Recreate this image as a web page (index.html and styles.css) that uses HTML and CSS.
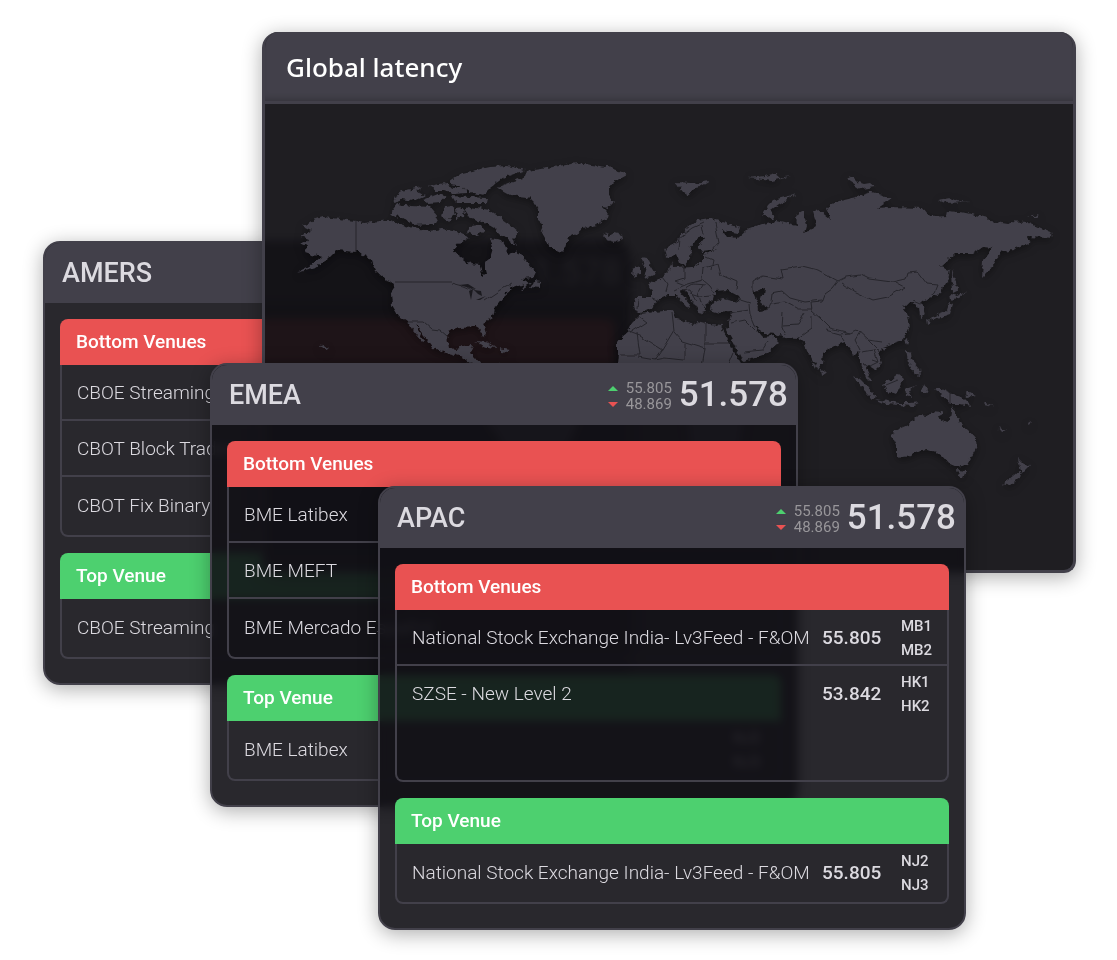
FILE: index.html
```
<!DOCTYPE html>
<html lang="en">
<head>
<meta charset="utf-8">
<meta name="viewport" content="width=device-width, initial-scale=1">
<title>Global latency</title>
<link rel="stylesheet" href="styles.css">
</head>
<body>
<main class="desktop">

<section class="panel amers">
  <header class="panel-head">
    <h2 class="region">AMERS</h2>
    <strong class="score">51.578</strong>
  </header>
  <div class="panel-body">
    <section class="venues">
      <h3 class="band bottom">Bottom Venues</h3>
      <table class="list">
        <tr><td class="name">CBOE Streaming</td></tr>
        <tr><td class="name">CBOT Block Trades</td></tr>
        <tr><td class="name">CBOT Fix Binary</td></tr>
      </table>
    </section>
    <section class="venues">
      <h3 class="band top">Top Venue</h3>
      <table class="list">
        <tr><td class="name">CBOE Streaming</td></tr>
      </table>
    </section>
  </div>
</section>

<section class="map-panel">
  <header class="map-head"><h1 class="map-title">Global latency</h1></header>
  <svg class="map" viewBox="265 104 808 466" role="img" aria-label="World map">
    <defs>
      <filter id="coast" x="-5%" y="-5%" width="110%" height="110%" color-interpolation-filters="sRGB">
        <feTurbulence type="fractalNoise" baseFrequency="0.2" numOctaves="2" seed="4" result="n"/>
        <feDisplacementMap in="SourceGraphic" in2="n" scale="6" xChannelSelector="R" yChannelSelector="G" result="d"/>
        <feDropShadow in="d" dx="0" dy="3" stdDeviation="4" flood-color="#000" flood-opacity=".4"/>
      </filter>
      <filter id="wiggle" x="-5%" y="-5%" width="110%" height="110%" color-interpolation-filters="sRGB">
        <feTurbulence type="fractalNoise" baseFrequency="0.1" numOctaves="1" seed="4" result="n"/>
        <feDisplacementMap in="SourceGraphic" in2="n" scale="5" xChannelSelector="R" yChannelSelector="G"/>
      </filter>
    </defs>
    <g class="land" filter="url(#coast)">
      <!-- North America -->
      <path d="M356 221L340 219 323 217 313 220 303 226 311 230 301 236 309 239 300 243 307 246 304 252 313 255 322 257 312 264 297 272 315 267 327 260 337 250 345 251 356 252 368 257 375 267 385 278 394 284 391 293 392 305 398 315 407 321 413 330 422 341 424 340 415 325 417 326 424 336 433 348 447 353 460 356 470 362 478 372 486 372 476 358 470 352 473 345 462 346 456 350 449 348 447 337 450 330 460 327 477 326 480 330 483 336 486 334 483 323 493 317 495 307 503 297 513 288 524 284 520 290 530 284 522 279 533 278 536 272 525 260 517 250 510 255 502 240 490 238 493 247 490 257 485 265 487 273 482 276 480 265 470 264 457 255 453 250 460 242 470 238 457 232 443 229 427 231 407 226 390 220 363 223Z"/>
      <path d="M534 281L540 282 542 288 530 287ZM393 197L406 190 422 187 416 192 426 195 412 201 402 199 396 203ZM390 213L397 204 412 206 430 207 438 217 434 224 413 225 405 219 392 215ZM423 200L438 194 446 197 440 202 428 203ZM429 186L444 183 454 188 463 186 467 193 453 194 444 191 436 191ZM450 181L462 173 490 167 508 166 525 170 503 178 491 187 483 195 470 192 463 187 452 184ZM452 196L487 198 486 203 456 203ZM444 207L453 206 455 215 448 222 442 217ZM456 208L464 207 463 217 457 219ZM470 207L490 210 502 219 520 232 513 238 516 246 508 240 500 235 494 228 487 224 478 220 468 217 464 211ZM470 226L481 225 485 231 474 236 467 232ZM371 262L377 266 386 276 392 281 386 280 376 271Z"/>
      <!-- Greenland and Iceland -->
      <path d="M498 187L513 181 525 177 527 171 547 168 577 163 607 167 628 174 614 182 609 188 609 196 614 201 608 207 602 206 608 212 607 218 597 225 583 228 576 234 568 238 565 248 561 252 550 247 545 239 541 232 543 224 538 220 538 210 533 202 528 197 510 195 501 190ZM603 235L607 233 609 236 614 233 622 235 623 239 614 242 607 240Z"/>
      <!-- Caribbean and South America -->
      <path d="M474 342L486 343 498 348 487 347ZM500 348L510 350 508 353 500 352ZM486 372L500 364 520 370 545 384 552 396 580 408 577 428 563 452 548 470 530 510 524 540 510 520 506 450 478 408Z"/>
      <!-- Africa -->
      <path d="M641 314L655 312 672 310 675 318 684 321 693 325 698 321 710 324 723 325 722 329 727 338 733 350 742 366 770 372 752 400 742 425 740 455 720 490 704 496 690 450 688 412 676 404 640 404 619 382 617 364 618 353 618 343 622 337 628 332 632 323Z"/>
      <!-- Eurasia -->
      <path fill-rule="evenodd" d="M635 297L634 304 635 310 642 313 652 308 657 300 668 295 676 295 683 303 688 309 690 304 680 292 685 290 693 302 700 314 706 312 703 306 710 302 714 298 716 291 727 290 740 297 738 302 723 299 711 303 710 310 720 313 731 312 729 323 727 331 735 346 743 362 767 353 779 342 773 336 763 337 754 326 764 333 775 334 785 337 797 338 805 344 808 352 817 370 822 363 823 353 837 345 845 342 850 349 854 356 858 352 861 364 868 382 871 379 864 364 870 367 875 370 882 363 878 352 883 347 900 341 907 333 910 326 907 313 902 307 912 302 919 307 920 317 925 314 922 303 930 297 940 293 948 280 950 270 940 267 955 254 973 254 983 247 992 248 983 260 982 278 990 270 997 258 1002 252 1013 250 1030 243 1027 237 1047 238 1053 233 1040 228 1027 222 1010 221 1008 224 990 221 987 218 967 213 948 211 947 216 930 217 923 208 890 207 877 208 892 198 872 192 857 197 840 201 827 207 830 219 820 211 813 212 817 225 805 233 807 226 803 211 796 215 797 226 777 221 763 224 747 230 738 238 726 236 722 230 738 233 740 228 723 222 710 218 697 220 682 232 677 243 664 248 666 257 677 255 680 263 685 265 690 258 691 247 700 235 705 237 698 247 702 252 718 250 702 255 702 262 693 267 673 268 672 261 669 270 662 277 652 284 647 283 652 291 652 297ZM753 292L765 288 764 295 760 298 767 310 758 311 757 302Z"/>
      <path d="M642 257L647 258 649 264 656 275 643 278 647 270 644 266ZM633 269L640 266 640 274 632 276ZM763 214L768 205 773 200 797 194 779 204 771 210 774 219 765 216ZM675 182L692 183 710 181 700 187 694 188 689 195 682 191ZM748 178L765 176 776 173 777 178 792 176 772 181ZM847 179L852 176 858 182 864 184 870 183 875 187 862 189ZM938 200L950 198 957 201 970 202 945 203ZM1029 217L1037 215 1038 217ZM952 269L956 282 957 291 953 293ZM950 293L958 295 967 291 958 298 951 300ZM949 302L953 304 950 314 938 318 928 320 938 314 946 311ZM927 319L932 322 928 325ZM905 338L909 339 907 344ZM882 347L887 347 885 351Z"/>
      <!-- South-east Asia and Oceania -->
      <path d="M821 368L826 373 822 376ZM853 375L860 379 868 387 876 397 873 399 864 390ZM875 399L887 401 899 403 910 403 921 402 912 406 886 404ZM883 384L891 380 899 374 904 378 901 385 897 394 886 392ZM905 389L915 386 909 391 912 397 906 395ZM906 350L911 352 912 360 919 368 920 376 914 374 908 362ZM924 384L928 392 921 392ZM934 389L942 389 951 393 962 397 971 406 960 404 950 404 944 396ZM966 391L976 396 967 398ZM984 401L993 406 985 404ZM998 427L1006 431 1002 432ZM1028 422L1031 420 1029 425ZM892 437L894 431 910 424 919 415 928 416 932 411 942 412 939 418 948 423 951 418 953 407 960 423 969 431 976 439 977 447 967 465 957 467 950 464 942 455 936 453 927 450 918 452 910 456 897 458 897 447ZM957 470L966 471 963 478 959 476ZM1018 458L1024 464 1030 465 1022 473 1020 468ZM1019 471L1022 475 1009 486 1003 484Z"/>
      <path d="M320 344L328 349 324 349Z"/>
    </g>
    <g class="borders" filter="url(#wiggle)">
      <!-- Americas -->
      <path d="M407 322L424 322 432 329 440 330 448 337M452 283L463 286 475 291M485 300L500 290 512 284"/>
      <!-- Europe -->
      <path d="M652 298L660 301M662 277L668 285 666 292M678 250L679 238 692 228 703 223M703 235L701 226M715 222L719 243 713 250M684 268L684 278 675 281 685 285 702 280 703 268 718 264 721 275 737 282 736 290M685 285L674 290M703 280L710 286 714 292M686 288L693 284 706 285M690 293L700 296 711 295M702 285L698 292 702 306M706 257L713 260 711 270M680 291L690 290 696 300M638 299L637 309"/>
      <!-- Central and South Asia -->
      <path d="M753 291L753 282 763 276 783 279 781 269 802 266 818 270 838 281 846 277 861 275 869 279 892 282 905 279 907 272 917 271 927 284 937 285 933 295M838 281L832 289 825 294 822 302 811 303 812 311 820 318 830 328 850 333 857 330 868 340 882 342M841 283L855 292 873 300 888 297 905 287 896 282M771 302L772 293 782 291 790 298 805 302 822 300M767 310L770 304 785 302 798 309 812 309M783 312L782 327 785 336M783 325L798 324 805 312M798 338L812 328 812 315M749 304L750 315 755 327M730 313L748 310M731 323L745 320 755 330M744 352L763 350 768 342M845 342L840 334 850 333M860 350L855 340 860 332M862 352L874 350 878 362 870 366M868 340L878 350M872 360L878 362M921 303L914 300M738 299L751 303M825 330L840 334"/>
      <!-- Africa -->
      <path d="M672 312L674 330 662 350 640 336 629 332M637 333L640 355 620 355M674 332L682 341 705 348 705 322M705 343L731 343M705 348L702 366M662 350L655 360M685 343L685 360M639 316L647 322 630 333M638 357L655 360 665 358 683 360M733 352L728 364"/>
      <path d="M950 392L950 404M886 386L898 381"/>
    </g>
    <path class="borders" d="M356 221V252M395 282H452"/>
    <path class="water" d="M459 285L468 284 476 289 470 288ZM469 291L473 289 471 300ZM474 290L481 291 482 296 478 294ZM476 300L486 296 480 300Z"/>
  </svg>
</section>

<section class="panel emea">
  <header class="panel-head">
    <h2 class="region">EMEA</h2>
    <div class="range"><span class="up">55.805</span><span class="down">48.869</span></div>
    <strong class="score">51.578</strong>
  </header>
  <div class="panel-body">
    <section class="venues">
      <h3 class="band bottom">Bottom Venues</h3>
      <table class="list">
        <tr><td class="name">BME Latibex</td><td class="codes"></td></tr>
        <tr><td class="name">BME MEFT</td><td class="codes"></td></tr>
        <tr><td class="name">BME Mercado Español</td><td class="codes"></td></tr>
      </table>
    </section>
    <section class="venues">
      <h3 class="band top">Top Venue</h3>
      <table class="list">
        <tr><td class="name">BME Latibex</td><td class="codes">NJ2<br>NJ3</td></tr>
      </table>
    </section>
  </div>
</section>

<section class="panel apac">
  <header class="panel-head">
    <h2 class="region">APAC</h2>
    <div class="range"><span class="up">55.805</span><span class="down">48.869</span></div>
    <strong class="score">51.578</strong>
  </header>
  <div class="panel-body">
    <section class="venues">
      <h3 class="band bottom">Bottom Venues</h3>
      <table class="list open">
        <tr><td class="name">National Stock Exchange India- Lv3Feed - F&amp;OM</td><td class="value">55.805</td><td class="codes">MB1<br>MB2</td></tr>
        <tr><td class="name">SZSE - New Level 2</td><td class="value">53.842</td><td class="codes">HK1<br>HK2</td></tr>
        <tr><td class="name"></td><td class="value"></td><td class="codes"></td></tr>
      </table>
    </section>
    <section class="venues">
      <h3 class="band top">Top Venue</h3>
      <table class="list">
        <tr><td class="name">National Stock Exchange India- Lv3Feed - F&amp;OM</td><td class="value">55.805</td><td class="codes">NJ2<br>NJ3</td></tr>
      </table>
    </section>
  </div>
</section>

</main>
</body>
</html>
```
FILE: styles.css
```
* { box-sizing: border-box; }

body {
  margin: 0;
  background: #fff;
  font-family: Roboto, "Liberation Sans", sans-serif;
  color: #dcdae0;
}

h1, h2, h3 { margin: 0; }

.desktop {
  position: relative;
  min-height: 960px;
  overflow: hidden;
}

/* Floating windows */
.panel, .map-panel {
  position: absolute;
  border: 2px solid #42404a;
  box-shadow: 0 4px 20px rgba(0, 0, 0, .32);
  overflow: hidden;
}

.panel {
  width: 588px;
  border-radius: 17px;
  background: rgba(18, 17, 22, .9);
  backdrop-filter: blur(4px);
}

.amers { left: 43px; top: 241px; }
.emea { left: 210px; top: 363px; }
.apac { left: 378px; top: 486px; }

.panel-head {
  display: flex;
  align-items: center;
  height: 60px;
  padding: 0 8px 0 17px;
  background: #42404a;
}

.region {
  flex: 1;
  font-size: 27px;
  line-height: 32px;
  font-weight: 500;
}

.range {
  display: flex;
  flex-direction: column;
  margin-right: 7px;
  padding-top: 2px;
  font-size: 15px;
  line-height: 16px;
  color: #98969a;
}

.range span {
  display: flex;
  align-items: center;
  gap: 8px;
}

.range span::before {
  content: "";
  border: 5px solid transparent;
}

.range .up::before { border-top: 0; border-bottom-color: #4dd06f; }
.range .down::before { border-bottom: 0; border-top-color: #e95252; }

.score {
  font-size: 35px;
  line-height: 44px;
  font-weight: 500;
}

.panel-body {
  display: flex;
  flex-direction: column;
  gap: 16px;
  padding: 16px 15px 24px;
}

.band {
  height: 46px;
  padding-left: 16px;
  border-radius: 8px 8px 0 0;
  font-size: 19px;
  line-height: 46px;
  font-weight: 500;
  color: #fff;
}

.band.bottom { background: #e95252; }
.band.top { background: #4dd06f; }

.list {
  width: 100%;
  table-layout: fixed;
  border: 2px solid #42404a;
  border-top: 0;
  border-radius: 0 0 8px 8px;
  border-collapse: separate;
  border-spacing: 0;
}

.list td {
  height: 56px;
  padding: 2px 0 0;
  border-bottom: 2px solid #42404a;
  white-space: nowrap;
}

.list tr:last-child td { height: 58px; border-bottom-color: transparent; }
.open tr:nth-child(2) td { border-bottom-color: transparent; }

.list .name {
  padding-left: 15px;
  font-size: 19px;
  line-height: 24px;
  font-weight: 300;
}

.list .value {
  width: 79px;
  font-size: 19px;
  line-height: 24px;
  font-weight: 500;
}

.list .codes {
  width: 46px;
  font-size: 15px;
  line-height: 24px;
  font-weight: 500;
}

/* Map window */
.map-panel {
  left: 262px;
  top: 32px;
  width: 814px;
  border-width: 3px;
  border-top-width: 0;
  border-radius: 16px 16px 12px 12px;
  background: rgba(17, 16, 20, .94);
  backdrop-filter: blur(4px);
}

.map-head {
  display: flex;
  align-items: center;
  height: 72px;
  padding: 0 21px;
  border-bottom: 3px solid #42404a;
  background: #42404a;
  box-shadow: inset 0 -6px 6px -4px rgba(0, 0, 0, .2);
}

.map-title {
  font-family: "Noto Sans", "Open Sans", sans-serif;
  font-size: 26px;
  line-height: 36px;
  font-weight: 500;
  color: #fff;
}

.map {
  display: block;
  width: 100%;
}

.land { fill: #42404a; }

.borders {
  fill: none;
  stroke: #26252b;
  stroke-width: 1;
}

.water { fill: #1b1a1f; }
```
